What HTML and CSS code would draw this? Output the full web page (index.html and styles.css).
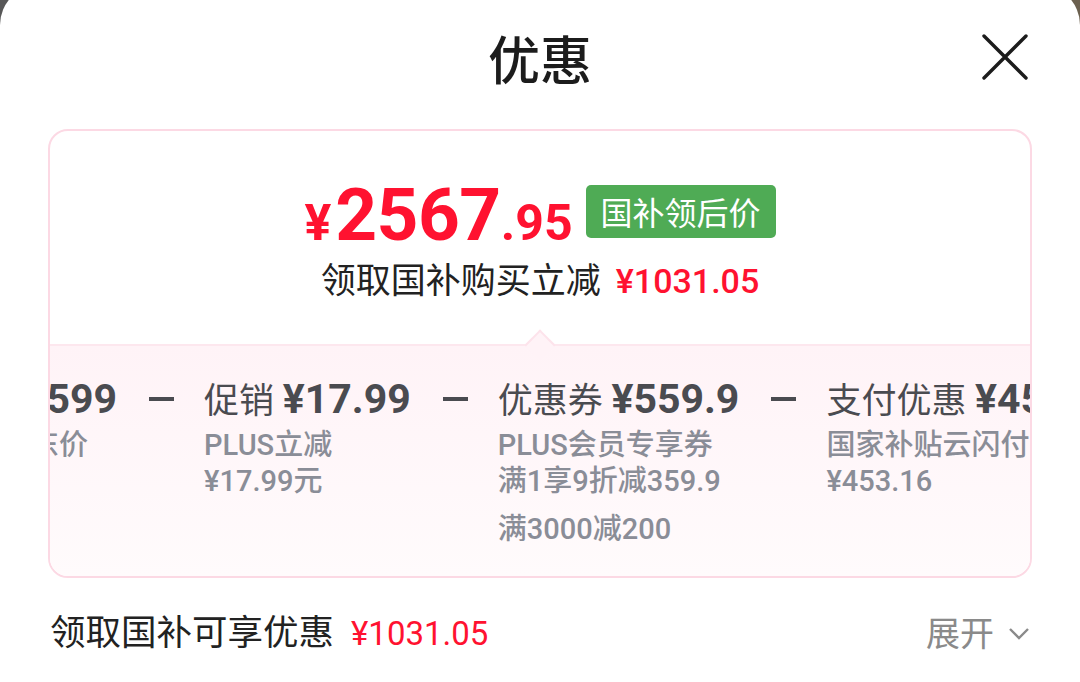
FILE: index.html
```html
<!DOCTYPE html>
<html lang="zh-CN">
<head>
  <meta charset="UTF-8" />
  <meta name="viewport" content="width=device-width, initial-scale=1.0" />
  <title>优惠</title>
  <link rel="stylesheet" href="styles.css">
</head>
<body>
  <div class="sheet">
    <div class="header">
      <span></span>
      <h1>优惠</h1>
      <button class="close" aria-label="关闭">
        <svg width="46" height="46" viewBox="0 0 46 46">
          <path d="M2 2 L44 44 M44 2 L2 44" stroke="#1c1c1c" stroke-width="3.4" stroke-linecap="round" fill="none" />
        </svg>
      </button>
    </div>

    <div class="card">
      <div class="summary">
        <div class="price-row">
          <div class="price"><span class="yen">¥</span><span class="int">2567</span><span class="dec">.95</span></div>
          <span class="badge">国补领后价</span>
        </div>
        <div class="saving">领取国补购买立减<span class="red">¥1031.05</span></div>
      </div>

      <div class="detail">
        <div class="track">
          <div class="item">
            <div class="item-title"><b>¥3599</b></div>
            <div class="sub">京东价</div>
          </div>
          <div class="minus"></div>
          <div class="item">
            <div class="item-title">促销 <b>¥17.99</b></div>
            <div class="sub">PLUS立减</div>
            <div class="sub">¥17.99元</div>
          </div>
          <div class="minus"></div>
          <div class="item">
            <div class="item-title">优惠券 <b>¥559.9</b></div>
            <div class="sub">PLUS会员专享券</div>
            <div class="sub">满1享9折减359.9</div>
            <div class="sub extra">满3000减200</div>
          </div>
          <div class="minus"></div>
          <div class="item">
            <div class="item-title">支付优惠 <b>¥453.16</b></div>
            <div class="sub">国家补贴云闪付</div>
            <div class="sub">¥453.16</div>
          </div>
        </div>
      </div>
    </div>

    <div class="footer">
      <div class="total">领取国补可享优惠<span class="red">¥1031.05</span></div>
      <div class="expand">展开
        <svg width="22" height="14" viewBox="0 0 22 14">
          <path d="M2 2 L11 11 L20 2" stroke="#8a8a8a" stroke-width="2.4" fill="none" />
        </svg>
      </div>
    </div>
  </div>
</body>
</html>
```

FILE: styles.css
```css
:root {
  --red: #ff1230;
  --green: #4fab55;
  --text: #1c1c1c;
  --item: #4a4b50;
  --subtle: #8a8d97;
  --pink: #fcd9e4;
}

body {
  margin: 0;
  font-family: Roboto, "Noto Sans CJK SC", sans-serif;
  background: linear-gradient(90deg, #585858, #6b604f);
  color: var(--text);
  overflow: hidden;
}

.sheet {
  margin-top: -15px;
  height: 697px;
  background-color: #fff;
  border-radius: 40px 40px 0 0;
}

.header {
  display: grid;
  grid-template-columns: 1fr auto 1fr;
  align-items: center;
  height: 144px;
  padding: 0 52px;
  box-sizing: border-box;
}

h1 {
  margin: 0;
  font-size: 52px;
  font-weight: 500;
  font-family: "Noto Sans CJK SC", sans-serif;
}

.close {
  justify-self: end;
  padding: 0;
  border: none;
  background: none;
  display: flex;
}

.card {
  margin: 0 48px;
  border: 2px solid var(--pink);
  border-radius: 20px;
  overflow: hidden;
  height: 449px;
  box-sizing: border-box;
  display: flex;
  flex-direction: column;
}

.summary {
  height: 213px;
  padding-top: 48px;
  box-sizing: border-box;
  display: flex;
  flex-direction: column;
  align-items: center;
}

.price-row {
  display: flex;
  align-items: flex-end;
  gap: 13px;
}

.price {
  color: var(--red);
  font-weight: 700;
  line-height: 1;
}

.yen {
  font-size: 50px;
  margin-right: 4px;
}

.int {
  font-size: 73px;
  letter-spacing: -0.5px;
}

.dec {
  font-size: 50px;
}

.badge {
  background-color: var(--green);
  color: #fff;
  font-size: 32px;
  line-height: 53px;
  padding: 0 15px;
  border-radius: 5px;
  margin-bottom: 14px;
  font-family: "Noto Sans CJK SC", sans-serif;
}

.saving {
  margin-top: 6px;
  font-size: 35px;
  line-height: 46px;
  color: #222;
}

.saving .red {
  margin-left: 15px;
  font-size: 34px;
}

.red {
  color: var(--red);
  font-weight: 500;
}

.detail {
  flex: 1;
  position: relative;
  border-top: 2px solid #fde7ee;
  background: linear-gradient(180deg, #fff3f7, #fffbfc);
}

.detail::before {
  content: "";
  position: absolute;
  top: -12px;
  left: calc(50% - 11px);
  width: 20px;
  height: 20px;
  border-top: 2px solid #fde3eb;
  border-left: 2px solid #fde3eb;
  background-color: #fff3f7;
  transform: rotate(45deg);
}

.track {
  display: flex;
  align-items: flex-start;
  margin-left: -49px;
  padding-top: 28px;
  white-space: nowrap;
}

.item-title {
  font-size: 35px;
  line-height: 50px;
  color: var(--item);
}

.item-title b {
  font-size: 41px;
  font-weight: 700;
}

.sub {
  font-size: 29px;
  line-height: 36px;
  color: var(--subtle);
  font-weight: 500;
}

.sub.extra {
  margin-top: 12px;
}

.minus {
  width: 25px;
  height: 4px;
  margin: 23px 30px 0 32px;
  background-color: var(--item);
  flex-shrink: 0;
}

.footer {
  display: flex;
  justify-content: space-between;
  align-items: center;
  padding: 30px 50px 0 50px;
  line-height: 50px;
}

.total {
  font-size: 35.5px;
  color: #222;
}

.total .red {
  margin-left: 17px;
  font-size: 33px;
  font-weight: 400;
}

.expand {
  display: flex;
  align-items: center;
  gap: 14px;
  font-size: 34px;
  color: #8a8a8a;
}
```
